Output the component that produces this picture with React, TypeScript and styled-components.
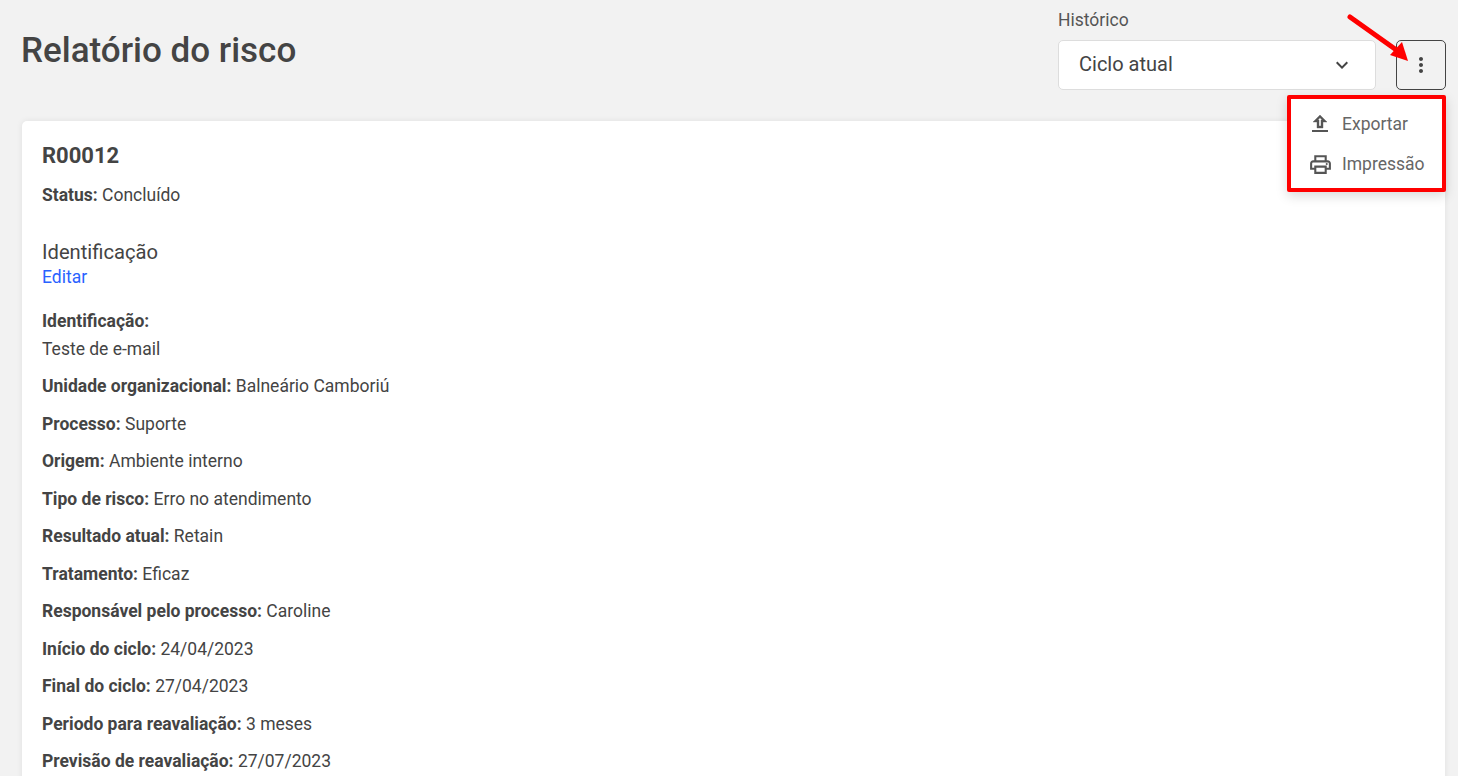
import React from "react";
import styled, { createGlobalStyle } from "styled-components";
import { MdKeyboardArrowDown, MdMoreVert, MdOutlinePrint } from "react-icons/md";

const GlobalStyle = createGlobalStyle`
  html, body {
    margin: 0;
    height: 100%;
    overflow: hidden;
    background: #f2f2f2;
    font-family: Roboto, "Liberation Sans", sans-serif;
    color: #444444;
  }
`;

const Page = styled.div`
  position: relative;
  width: 1458px;
  height: 776px;
  overflow: hidden;
  box-sizing: border-box;
  padding: 0 12px 0 21px;
`;

const Header = styled.header`
  display: flex;
  justify-content: space-between;
  height: 121px;
`;

const Title = styled.h1`
  margin: 30px 0 0;
  font-size: 35px;
  line-height: 42px;
  font-weight: 500;
  color: #444444;
`;

const Controls = styled.div`
  display: flex;
  align-items: flex-end;
  gap: 20px;
  height: 90px;
`;

const Field = styled.div`
  display: flex;
  flex-direction: column;
  gap: 10px;
`;

const FieldLabel = styled.label`
  font-size: 17.5px;
  line-height: 20px;
  padding-top: 8px;
  color: #555555;
`;

const Select = styled.div`
  display: flex;
  align-items: center;
  justify-content: space-between;
  box-sizing: border-box;
  width: 318px;
  height: 50px;
  padding: 0 21px 0 20px;
  background: #ffffff;
  border: 1px solid #dddddd;
  border-radius: 5px;
  font-size: 20px;
  color: #444444;
`;

const SelectText = styled.span`
  margin-bottom: 3px;
`;

const IconButton = styled.button`
  display: flex;
  align-items: center;
  justify-content: center;
  box-sizing: border-box;
  width: 50px;
  height: 50px;
  padding: 0;
  background: transparent;
  border: 1px solid #444444;
  border-radius: 5px;
  color: #444444;
`;

const Card = styled.main`
  box-sizing: border-box;
  margin: 0 1px;
  height: 700px;
  padding: 22px 20px;
  background: #ffffff;
  border-radius: 5px;
  box-shadow: 0 0 6px rgba(0, 0, 0, 0.08);
`;

const Code = styled.h2`
  margin: 0 0 14px;
  font-size: 22px;
  line-height: 26px;
  font-weight: 700;
  color: #444444;
`;

const Row = styled.p<{ $gap?: number }>`
  margin: 0 0 ${(p) => p.$gap ?? 13.5}px;
  font-size: 17.5px;
  line-height: 24px;
  color: #444444;

  strong {
    font-weight: 700;
  }
`;

const SectionTitle = styled.h3`
  margin: 32px 0 0;
  font-size: 20.2px;
  line-height: 26px;
  font-weight: 400;
  color: #444444;
`;

const EditLink = styled.a`
  display: block;
  margin: 0 0 20px;
  font-size: 17.5px;
  line-height: 24px;
  color: #2962ff;
`;

const Block = styled.span`
  display: block;
  margin-top: 4px;
`;

const Menu = styled.nav`
  position: absolute;
  top: 95px;
  left: 1287px;
  box-sizing: border-box;
  width: 159px;
  height: 97px;
  padding: 5px 0 0 17px;
  background: #ffffff;
  border: 4px solid #ff0000;
  border-radius: 2px;
  box-shadow: 0 4px 12px rgba(0, 0, 0, 0.15);
`;

const MenuItem = styled.div`
  display: flex;
  align-items: center;
  gap: 9px;
  height: 40px;
  font-size: 17.5px;
  color: #666666;

  svg {
    flex: none;
    color: #555555;
  }
`;

const Arrow = styled.svg`
  position: absolute;
  top: 12px;
  left: 1345px;
`;

const UploadIcon = () => (
  <svg width="25" height="24" viewBox="0 0 25 24" fill="currentColor">
    <path
      d="M9 16h6v-6h4l-7-7-7 7h4v6zm2-2V8H9.83L12 5.83 14.17 8H13v6h-2z"
      fillRule="evenodd"
      stroke="currentColor"
      strokeWidth="0.4"
    />
    <path d="M4 18h16v2H4z" />
  </svg>
);

const rows: [string, string][] = [
  ["Unidade organizacional:", "Balneário Camboriú"],
  ["Processo:", "Suporte"],
  ["Origem:", "Ambiente interno"],
  ["Tipo de risco:", "Erro no atendimento"],
  ["Resultado atual:", "Retain"],
  ["Tratamento:", "Eficaz"],
  ["Responsável pelo processo:", "Caroline"],
  ["Início do ciclo:", "24/04/2023"],
  ["Final do ciclo:", "27/04/2023"],
  ["Periodo para reavaliação:", "3 meses"],
  ["Previsão de reavaliação:", "27/07/2023"],
];

const App = () => {
  return (
    <Page>
      <GlobalStyle />
      <Header>
        <Title>Relatório do risco</Title>
        <Controls>
          <Field>
            <FieldLabel>Histórico</FieldLabel>
            <Select>
              <SelectText>Ciclo atual</SelectText>
              <MdKeyboardArrowDown size={24} />
            </Select>
          </Field>
          <IconButton>
            <MdMoreVert size={24} />
          </IconButton>
        </Controls>
      </Header>
      <Card>
        <Code>R00012</Code>
        <Row $gap={0}>
          <strong>Status:</strong> Concluído
        </Row>
        <SectionTitle>Identificação</SectionTitle>
        <EditLink>Editar</EditLink>
        <Row $gap={13}>
          <strong>Identificação:</strong>
          <Block>Teste de e-mail</Block>
        </Row>
        {rows.map(([label, value]) => (
          <Row key={label}>
            <strong>{label}</strong> {value}
          </Row>
        ))}
      </Card>
      <Menu>
        <MenuItem>
          <UploadIcon />
          Exportar
        </MenuItem>
        <MenuItem>
          <MdOutlinePrint size={25} />
          Impressão
        </MenuItem>
      </Menu>
      <Arrow width="70" height="70" viewBox="0 0 70 70">
        <line x1="5" y1="5" x2="50" y2="37" stroke="#ff0000" strokeWidth="5" strokeLinecap="round" />
        <polygon points="63,49 45,43 57,30" fill="#ff0000" />
      </Arrow>
    </Page>
  );
};

export default App;
